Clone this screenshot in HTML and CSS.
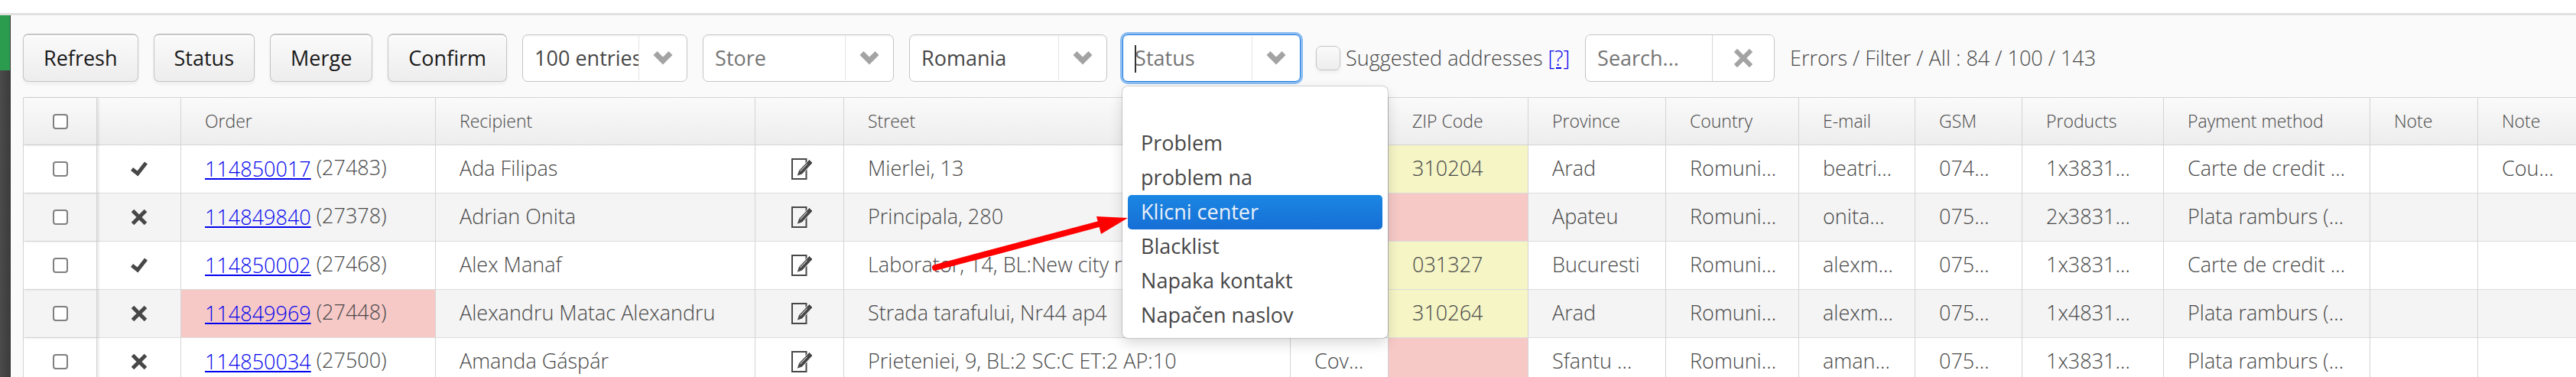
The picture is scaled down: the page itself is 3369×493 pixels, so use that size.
FILE: index.html
```html
<!DOCTYPE html>
<html lang="en">
<head>
    <meta charset="UTF-8">
    <meta name="viewport" content="width=device-width, initial-scale=1.0">
    <title>Orders</title>
    <link rel="stylesheet" href="styles.css">
</head>
<body>
    <svg class="sprite" aria-hidden="true">
        <symbol id="chevron" viewBox="0 0 26 20"><path d="M3 3.500 L13 13.500 L23 3.500" fill="none" stroke="currentColor" stroke-width="7"/></symbol>
        <symbol id="check" viewBox="0 0 22 20"><path d="M1.500 10 L9 16 L20 2" fill="none" stroke="currentColor" stroke-width="5"/></symbol>
        <symbol id="cross" viewBox="0 0 22 22"><path d="M2.500 2.500 L19.500 19.500 M19.500 2.500 L2.500 19.500" fill="none" stroke="currentColor" stroke-width="5"/></symbol>
        <symbol id="edit" viewBox="0 0 28 28">
            <path d="M1 1 H19.500 V27 H1 Z" fill="none" stroke="currentColor" stroke-width="2"/>
            <path d="M23.500 1.500 L28 6 L14 21 L7 23.500 L9.500 16 Z" fill="currentColor" stroke="#fff" stroke-width="1"/>
            <path d="M11.500 17 L20.500 7.500" stroke="#fff" stroke-width="1"/>
        </symbol>
    </svg>

    <div class="topbar"></div>
    <div class="layout">
        <nav class="sidebar">
            <div class="sidebar-active"></div>
        </nav>

        <main class="content">
            <div class="toolbar">
                <button type="button" class="btn">Refresh</button>
                <button type="button" class="btn">Status</button>
                <button type="button" class="btn">Merge</button>
                <button type="button" class="btn">Confirm</button>

                <div class="combo combo-entries">
                    <select aria-label="Page size"><option>100 entries</option></select>
                    <svg class="chevron"><use href="#chevron"/></svg>
                </div>
                <div class="combo combo-store">
                    <select class="empty" aria-label="Store"><option>Store</option></select>
                    <svg class="chevron"><use href="#chevron"/></svg>
                </div>
                <div class="combo combo-country">
                    <select aria-label="Country"><option>Romania</option></select>
                    <svg class="chevron"><use href="#chevron"/></svg>
                </div>
                <div class="combo combo-status focused">
                    <input type="text" role="combobox" aria-label="Status" aria-expanded="true" aria-controls="statusList" placeholder="Status">
                    <svg class="chevron"><use href="#chevron"/></svg>
                    <ul class="popup" id="statusList" role="listbox">
                        <li role="option"></li>
                        <li role="option">Problem</li>
                        <li role="option">problem na</li>
                        <li role="option" class="selected" aria-selected="true">Klicni center</li>
                        <li role="option">Blacklist</li>
                        <li role="option">Napaka kontakt</li>
                        <li role="option">Napačen naslov</li>
                    </ul>
                    <svg class="arrow" viewBox="0 0 264 76">
                        <path d="M12 69 L230 11" stroke="#f00" stroke-width="8" stroke-linecap="round"/>
                        <path d="M223 2 L264 4 L229 25 Z" fill="#f00"/>
                    </svg>
                </div>

                <div class="suggested">
                    <input type="checkbox" id="suggested">
                    <label for="suggested">Suggested addresses</label>
                    <a href="#help">[?]</a>
                </div>

                <div class="search">
                    <input type="text" aria-label="Search" placeholder="Search...">
                    <button type="button" aria-label="Clear"><svg><use href="#cross"/></svg></button>
                </div>
                <span>Errors / Filter / All : 84 / 100 / 143</span>
            </div>

            <table class="grid">
                <colgroup>
                    <col class="c-select"><col class="c-state"><col class="c-order"><col class="c-recipient">
                    <col class="c-edit"><col class="c-street"><col class="c-city"><col class="c-zip">
                    <col class="c-province"><col class="c-country"><col class="c-email"><col class="c-gsm">
                    <col class="c-products"><col class="c-payment"><col class="c-note"><col class="c-note2">
                </colgroup>
                <thead>
                    <tr>
                        <th class="icon frozen"><input type="checkbox" aria-label="Select all"></th>
                        <th></th>
                        <th>Order</th>
                        <th>Recipient</th>
                        <th></th>
                        <th>Street</th>
                        <th></th>
                        <th>ZIP Code</th>
                        <th>Province</th>
                        <th>Country</th>
                        <th>E-mail</th>
                        <th>GSM</th>
                        <th>Products</th>
                        <th>Payment method</th>
                        <th>Note</th>
                        <th>Note</th>
                    </tr>
                </thead>
                <tbody>
                    <tr>
                        <td class="icon frozen"><input type="checkbox" aria-label="Select 114850017"></td>
                        <td class="icon"><svg class="check"><use href="#check"/></svg></td>
                        <td><a href="#114850017">114850017</a> (27483)</td>
                        <td>Ada Filipas</td>
                        <td class="icon action"><svg class="edit"><use href="#edit"/></svg></td>
                        <td>Mierlei, 13</td>
                        <td></td>
                        <td class="warn">310204</td>
                        <td>Arad</td>
                        <td>Romuni…</td>
                        <td>beatri…</td>
                        <td>074…</td>
                        <td>1x3831…</td>
                        <td>Carte de credit …</td>
                        <td></td>
                        <td>Cou…</td>
                    </tr>
                    <tr>
                        <td class="icon frozen"><input type="checkbox" aria-label="Select 114849840"></td>
                        <td class="icon"><svg class="cross"><use href="#cross"/></svg></td>
                        <td><a href="#114849840">114849840</a> (27378)</td>
                        <td>Adrian Onita</td>
                        <td class="icon action"><svg class="edit"><use href="#edit"/></svg></td>
                        <td>Principala, 280</td>
                        <td></td>
                        <td class="error"></td>
                        <td>Apateu</td>
                        <td>Romuni…</td>
                        <td>onita…</td>
                        <td>075…</td>
                        <td>2x3831…</td>
                        <td>Plata ramburs (…</td>
                        <td></td>
                        <td></td>
                    </tr>
                    <tr>
                        <td class="icon frozen"><input type="checkbox" aria-label="Select 114850002"></td>
                        <td class="icon"><svg class="check"><use href="#check"/></svg></td>
                        <td><a href="#114850002">114850002</a> (27468)</td>
                        <td>Alex Manaf</td>
                        <td class="icon action"><svg class="edit"><use href="#edit"/></svg></td>
                        <td>Laborator, 14, BL:New city re</td>
                        <td></td>
                        <td class="warn">031327</td>
                        <td>Bucuresti</td>
                        <td>Romuni…</td>
                        <td>alexm…</td>
                        <td>075…</td>
                        <td>1x3831…</td>
                        <td>Carte de credit …</td>
                        <td></td>
                        <td></td>
                    </tr>
                    <tr>
                        <td class="icon frozen"><input type="checkbox" aria-label="Select 114849969"></td>
                        <td class="icon"><svg class="cross"><use href="#cross"/></svg></td>
                        <td class="error"><a href="#114849969">114849969</a> (27448)</td>
                        <td>Alexandru Matac Alexandru</td>
                        <td class="icon action"><svg class="edit"><use href="#edit"/></svg></td>
                        <td>Strada tarafului, Nr44 ap4</td>
                        <td></td>
                        <td class="warn">310264</td>
                        <td>Arad</td>
                        <td>Romuni…</td>
                        <td>alexm…</td>
                        <td>075…</td>
                        <td>1x4831…</td>
                        <td>Plata ramburs (…</td>
                        <td></td>
                        <td></td>
                    </tr>
                    <tr>
                        <td class="icon frozen"><input type="checkbox" aria-label="Select 114850034"></td>
                        <td class="icon"><svg class="cross"><use href="#cross"/></svg></td>
                        <td><a href="#114850034">114850034</a> (27500)</td>
                        <td>Amanda Gáspár</td>
                        <td class="icon action"><svg class="edit"><use href="#edit"/></svg></td>
                        <td>Prieteniei, 9, BL:2 SC:C ET:2 AP:10</td>
                        <td>Cov…</td>
                        <td class="error"></td>
                        <td>Sfantu …</td>
                        <td>Romuni…</td>
                        <td>aman…</td>
                        <td>075…</td>
                        <td>1x3831…</td>
                        <td>Plata ramburs (…</td>
                        <td></td>
                        <td></td>
                    </tr>
                </tbody>
            </table>
        </main>
    </div>
</body>
</html>
```

FILE: styles.css
```css
* {
    box-sizing: border-box;
}

body {
    margin: 0;
    height: 100vh;
    display: flex;
    flex-direction: column;
    overflow: hidden;
    background: #fafafa;
    color: #474747;
    font-family: "Open Sans", sans-serif;
    font-size: 27px;
    font-weight: 300;
    line-height: 36px;
}

button,
input,
select {
    margin: 0;
    font: inherit;
    color: inherit;
}

a {
    color: #0000ee;
}

.sprite {
    position: absolute;
    width: 0;
    height: 0;
}

.topbar {
    flex: none;
    height: 20px;
    background: #fff;
    border-bottom: 3px solid #e0e0e0;
}

.layout {
    flex: 1;
    min-height: 0;
    display: flex;
}

.sidebar {
    flex: none;
    width: 14px;
    background: linear-gradient(to right, #4b4b4b, #3c3c3c);
    border-right: 1px solid #3a3a3a;
}

.sidebar-active {
    height: 72px;
    background: #2b9b4e;
}

.content {
    flex: 1;
    min-width: 0;
    padding-left: 16px;
}

/* Toolbar */
.toolbar {
    display: flex;
    align-items: center;
    gap: 20px;
    padding: 24px 0 20px;
    white-space: nowrap;
}

.btn {
    height: 63px;
    padding: 0 26px;
    border: 1px solid #c5c5c5;
    border-top-width: 2px;
    border-radius: 7px;
    background: linear-gradient(#fafafa, #ededed);
    box-shadow: inset 0 2px 0 #fff, 0 3px 4px rgba(0, 0, 0, 0.05);
    color: #191919;
    font-weight: 400;
}

.combo {
    position: relative;
    display: flex;
    align-items: center;
    height: 62px;
    border: 1px solid #c5c5c5;
    border-radius: 7px;
    background: #fff;
    box-shadow: inset 0 2px 0 #f7f7f7;
    font-weight: 400;
}

.combo-entries {
    width: 216px;
}

.combo-store {
    width: 250px;
}

.combo-country {
    width: 259px;
}

.combo-status {
    width: 233px;
}

.combo select,
.combo input {
    flex: 1;
    min-width: 0;
    height: 58px;
    padding: 0 0 0 15px;
    border: none;
    border-right: 1px solid #e4e4e4;
    outline: none;
    background: none;
    appearance: none;
}

.combo select.empty {
    color: #757575;
}

.combo input::placeholder,
.search input::placeholder {
    color: #757575;
    opacity: 1;
}

.chevron {
    width: 26px;
    height: 20px;
    margin: 0 18px;
    color: #a3a3a3;
}

.focused {
    border-color: #197de1;
    box-shadow: 0 0 0 3px #8cbcf0;
}

/* text caret */
.focused::before {
    content: "";
    position: absolute;
    left: 15px;
    top: 13px;
    width: 2px;
    height: 36px;
    background: #333;
}

.popup {
    position: absolute;
    z-index: 1;
    top: 67px;
    left: -1px;
    width: 347px;
    margin: 0;
    padding: 7px;
    list-style: none;
    border-radius: 7px;
    background: #fff;
    box-shadow: 0 0 0 1px rgba(0, 0, 0, 0.14), 0 7px 17px rgba(0, 0, 0, 0.15);
}

.popup li {
    height: 45px;
    padding: 0 17px;
    border-radius: 5px;
    line-height: 44px;
}

.popup .selected {
    background: linear-gradient(#1b87e3, #166ed5);
    color: #ecf2f8;
}

.arrow {
    position: absolute;
    z-index: 2;
    top: 235px;
    right: 225px;
    width: 264px;
    height: 76px;
}

.suggested {
    display: flex;
    align-items: center;
    gap: 7px;
}

.suggested input {
    width: 32px;
    height: 32px;
    border: 1px solid #c5c5c5;
    border-radius: 7px;
    background: linear-gradient(#fafafa, #ededed);
    box-shadow: 0 3px 4px rgba(0, 0, 0, 0.05);
    appearance: none;
}

.search {
    display: flex;
    height: 62px;
    border: 1px solid #c5c5c5;
    border-radius: 7px;
    background: #fff;
    font-weight: 400;
}

.search input {
    width: 165px;
    padding: 0 15px;
    border: none;
    background: none;
}

.search button {
    display: flex;
    align-items: center;
    justify-content: center;
    width: 81px;
    padding: 0;
    border: none;
    border-left: 1px solid #d8d8d8;
    background: none;
    color: #a3a3a3;
}

.search svg {
    width: 26px;
    height: 26px;
}

/* Orders grid */
.grid {
    width: 100%;
    table-layout: fixed;
    border-collapse: separate;
    border-spacing: 0;
    border-top: 1px solid #d4d4d4;
    border-left: 1px solid #d4d4d4;
    background: #fff;
}

.c-select { width: 96px; }
.c-state { width: 110px; }
.c-order { width: 333px; }
.c-recipient { width: 418px; }
.c-edit { width: 116px; }
.c-city { width: 128px; }
.c-zip { width: 183px; }
.c-province { width: 180px; }
.c-country { width: 174px; }
.c-email { width: 152px; }
.c-gsm { width: 140px; }
.c-products { width: 185px; }
.c-payment { width: 270px; }
.c-note { width: 141px; }
.c-note2 { width: 128px; }

.grid th,
.grid td {
    height: 63px;
    padding: 0 0 2px 31px;
    border-right: 1px solid #d4d4d4;
    border-bottom: 1px solid #dcdcdc;
    text-align: left;
    white-space: nowrap;
}

.grid th:last-child,
.grid td:last-child {
    border-right: none;
}

.grid th {
    height: 62px;
    border-bottom-color: #d4d4d4;
    background: linear-gradient(#fafafa, #ededed);
    font-size: 23px;
    font-weight: 300;
}

.grid tbody tr:nth-child(even) {
    background: #f4f4f4;
}

.grid a {
    display: inline-block;
    vertical-align: middle;
}

.grid .icon {
    padding: 0;
    text-align: center;
}

.grid .action {
    padding-left: 6px;
}

.grid .frozen {
    position: relative;
    box-shadow: 2px 0 3px rgba(0, 0, 0, 0.1);
}

.grid .warn {
    background: #f5f5c6;
}

.grid .error {
    background: #f6c9c7;
}

.grid input {
    display: block;
    width: 20px;
    height: 20px;
    margin: 0 auto;
    border: 2px solid #808080;
    border-radius: 4px;
    background: #fff;
    appearance: none;
}

.grid svg {
    display: block;
    margin: 0 auto;
}

.check {
    width: 22px;
    height: 20px;
}

.cross {
    width: 22px;
    height: 22px;
}

.edit {
    width: 28px;
    height: 28px;
}
```
